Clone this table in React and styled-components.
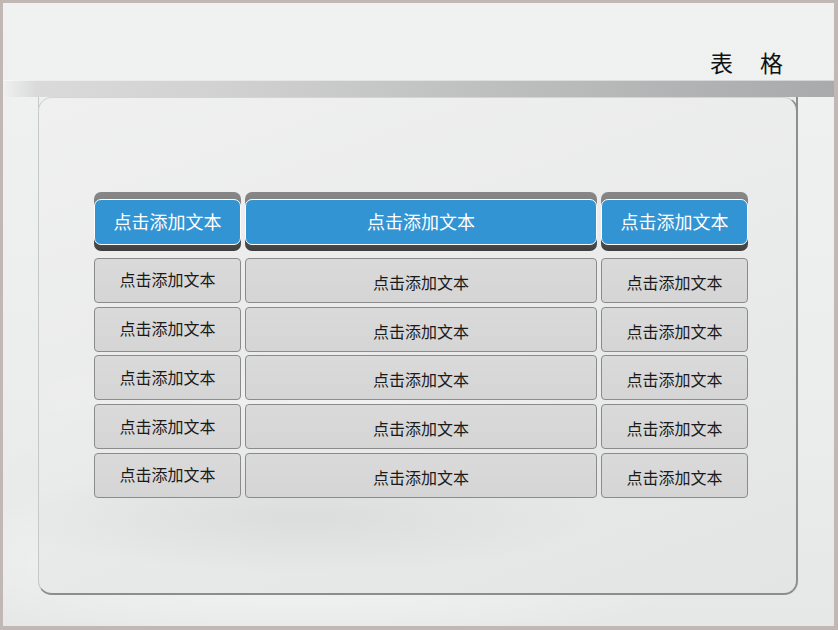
import React from 'react';
import styled, { createGlobalStyle } from 'styled-components';

const GlobalStyle = createGlobalStyle`
  html, body {
    margin: 0;
    padding: 0;
    background: #c1b8b6;
  }
  body {
    font-family: "Noto Sans CJK SC", "Noto Sans", sans-serif;
  }
`;

const Frame = styled.div`
  box-sizing: border-box;
  width: 838px;
  height: 630px;
  border-style: solid;
  border-color: #c1b8b6;
  border-width: 3px 4px 4px 3px;
  background:
    radial-gradient(ellipse 520px 90px at 360px 470px, rgba(200, 200, 200, 0.35), transparent 70%),
    radial-gradient(ellipse 600px 120px at 300px 560px, rgba(255, 255, 255, 0.6), transparent 70%),
    linear-gradient(to bottom, #f0f1f1 0%, #eceded 60%, #e6e7e7 100%);
  display: flex;
  flex-direction: column;
`;

const Header = styled.div`
  height: 77px;
  display: flex;
  justify-content: flex-end;
  align-items: flex-end;
  padding-right: 51px;
`;

const Title = styled.div`
  display: flex;
  gap: 27px;
  font-size: 23px;
  line-height: 30px;
  color: #111;
  margin-bottom: 3px;
`;

const Bar = styled.div`
  height: 16px;
  background: linear-gradient(
    to right,
    rgba(230, 230, 230, 0) 0%,
    #dadada 4%,
    #d2d2d2 25%,
    #bdbebe 60%,
    #a9aaab 100%
  );
  border-top: 1px solid rgba(255, 255, 255, 0.5);
`;

const Panel = styled.div`
  box-sizing: border-box;
  margin: 0 36px 0 35px;
  height: 498px;
  border-radius: 0 0 14px 14px;
  border-style: solid;
  border-width: 0 2px 2px 1px;
  border-color: #c9caca #8e8f8f #8c8d8d #c6c7c7;
  background:
    radial-gradient(ellipse 420px 80px at 260px 420px, rgba(205, 205, 205, 0.45), transparent 70%),
    radial-gradient(ellipse 500px 70px at 320px 300px, rgba(255, 255, 255, 0.35), transparent 70%),
    linear-gradient(160deg, #f0f0f0 0%, #e9eaea 55%, #e3e4e4 100%);
  padding: 95px 0 0 55px;
  position: relative;
  &::before {
    content: '';
    position: absolute;
    top: 0;
    left: -1px;
    right: -2px;
    height: 14px;
    border-radius: 14px 14px 0 0;
    border-style: solid;
    border-width: 1px 2px 0 1px;
    border-color: #d3d4d4 #8e8f8f transparent #cfd0d0;
  }
`;

const Table = styled.div`
  display: grid;
  grid-template-columns: 147px 352px 147px;
  column-gap: 4px;
  row-gap: 3.75px;
`;

const HeadCell = styled.div`
  height: 59px;
  box-sizing: border-box;
  border-radius: 7px;
  background: linear-gradient(to bottom, #878787 0%, #7a7a7a 40%, #4d4d4d 85%, #3e3e3e 100%);
  padding: 7px 0 6px;
  margin-bottom: 3px;
`;

const HeadInner = styled.div`
  box-sizing: border-box;
  height: 100%;
  border: 1.5px solid #ffffff;
  border-radius: 7px;
  background: #3394d3;
  color: #ffffff;
  font-size: 18px;
  display: flex;
  align-items: center;
  justify-content: center;
  padding-bottom: 2px;
`;

const Cell = styled.div`
  box-sizing: border-box;
  height: 45px;
  border: 1px solid #8b8b8b;
  border-radius: 4px;
  background: linear-gradient(to bottom, #dadada, #d5d5d5);
  color: #1a1a1a;
  font-size: 16px;
  display: flex;
  align-items: center;
  justify-content: center;
  padding-top: ${(p) => (p.$first ? '0' : '3px')};
  padding-bottom: ${(p) => (p.$first ? '2px' : '0')};
`;

const label = '点击添加文本';
const rows = [0, 1, 2, 3, 4];

export default function App() {
  return (
    <>
      <GlobalStyle />
      <Frame>
        <Header>
          <Title>
            <span>表</span>
            <span>格</span>
          </Title>
        </Header>
        <Bar />
        <Panel>
          <Table>
            {[0, 1, 2].map((c) => (
              <HeadCell key={`h${c}`}>
                <HeadInner>{label}</HeadInner>
              </HeadCell>
            ))}
            {rows.map((r) =>
              [0, 1, 2].map((c) => (
                <Cell key={`${r}-${c}`} $first={c === 0}>
                  {label}
                </Cell>
              ))
            )}
          </Table>
        </Panel>
      </Frame>
    </>
  );
}
